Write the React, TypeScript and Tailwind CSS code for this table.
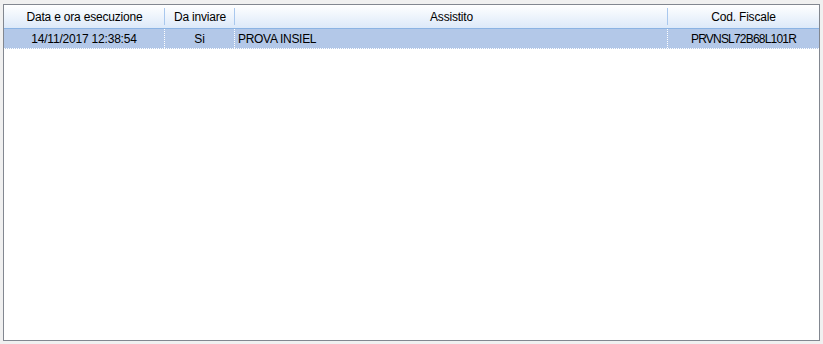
type Column = {
	key: string;
	label: string;
	width: string;
};

const columns: Column[] = [
	{ key: 'date', label: 'Data e ora esecuzione', width: 'w-[161px]' },
	{ key: 'send', label: 'Da inviare', width: 'w-[70px]' },
	{ key: 'patient', label: 'Assistito', width: 'w-[433px]' },
	{ key: 'cf', label: 'Cod. Fiscale', width: 'flex-1' },
];

const rows = [
	{
		date: '14/11/2017 12:38:54',
		send: 'Si',
		patient: 'PROVA INSIEL',
		cf: 'PRVNSL72B68L101R',
	},
];

export default function App(): JSX.Element {
	return (
		<div className="w-[823px] h-[344px] bg-[#f0f0f0] pt-[4px] pl-[3px] pr-[3px] pb-[3px] font-['Liberation_Sans',Arial,sans-serif] text-[12px] text-black">
			<div className="h-full border border-[#828790] bg-white flex flex-col">
				{/* header */}
				<div className="flex h-[24px] border-b border-[#8bb3e3] bg-gradient-to-b from-[#ffffff] to-[#dce9f9]">
					{columns.map((col, i) => (
						<div
							key={col.key}
							className={`${col.width} relative flex items-center justify-center`}
						>
							<span className="tracking-[-0.2px]">{col.label}</span>
							{i < columns.length - 1 && (
								<span className="absolute right-0 top-[3px] h-[17px] w-px bg-[#a9c8ee]" />
							)}
						</div>
					))}
				</div>

				{/* rows */}
				{rows.map((row) => (
					<div
						key={row.cf}
						className="flex h-[20px] bg-[#b3c8e8] border-b border-dotted border-white"
					>
						<div className="w-[161px] flex items-center justify-center border-r border-dotted border-white tracking-[-0.2px]">
							{row.date}
						</div>
						<div className="w-[70px] flex items-center justify-center border-r border-dotted border-white">
							{row.send}
						</div>
						<div className="w-[433px] flex items-center pl-[3px] border-r border-dotted border-white tracking-[-0.3px]">
							{row.patient}
						</div>
						<div className="flex-1 flex items-center justify-center tracking-[-0.8px]">
							{row.cf}
						</div>
					</div>
				))}
			</div>
		</div>
	);
}
